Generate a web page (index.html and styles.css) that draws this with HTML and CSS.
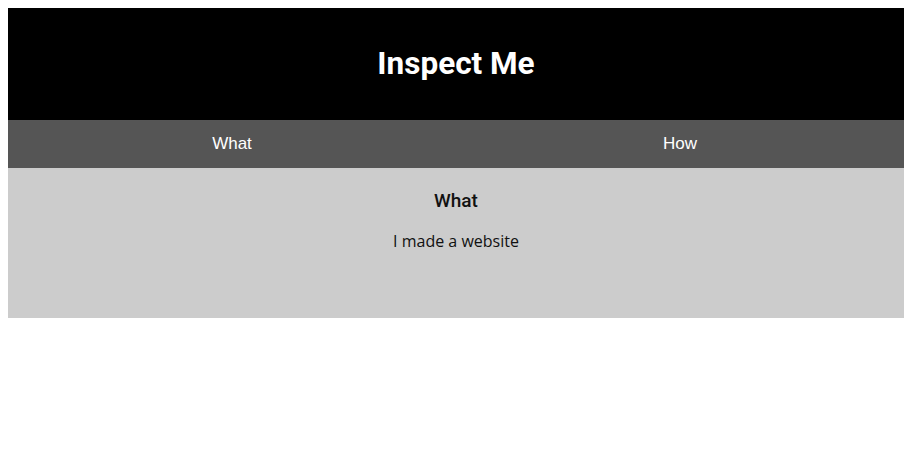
FILE: index.html
```html
<!DOCTYPE html>
<html lang="en">
<head>
  <meta charset="UTF-8">
  <title>Inspect Me</title>
  <link rel="stylesheet" href="styles.css">
</head>
<body>

<header class="cabecera">
  <h1>Inspect Me</h1>
</header>

<nav class="menu">
  <a href="#what">What</a>
  <a href="#how">How</a>
</nav>

<section class="contenido" id="what">
  <h3>What</h3>
  <p>I made a website</p>
</section>

</body>
</html>
```

FILE: styles.css
```css
body {
  margin: 8px;
  font-family: 'Open Sans', sans-serif;
}

.cabecera {
  background: #000;
  color: #fff;
  height: 112px;
  display: flex;
  align-items: center;
  justify-content: center;
}

.cabecera h1 {
  margin: 0 0 2px;
  font-family: Roboto, sans-serif;
  font-size: 31.5px;
  font-weight: bold;
}

.menu {
  display: flex;
  background: #555;
  height: 48px;
}

.menu a {
  flex: 1;
  display: flex;
  align-items: center;
  justify-content: center;
  color: #fff;
  text-decoration: none;
  font-family: 'Liberation Sans', Arial, sans-serif;
  font-size: 17px;
}

.contenido {
  background: #ccc;
  height: 150px;
  text-align: center;
  padding-top: 21px;
  box-sizing: border-box;
  color: #111;
}

.contenido h3 {
  margin: 0;
  font-family: Roboto, sans-serif;
  font-size: 19px;
  font-weight: 500;
}

.contenido p {
  margin: 18px 0 0;
  font-size: 16px;
}
```
